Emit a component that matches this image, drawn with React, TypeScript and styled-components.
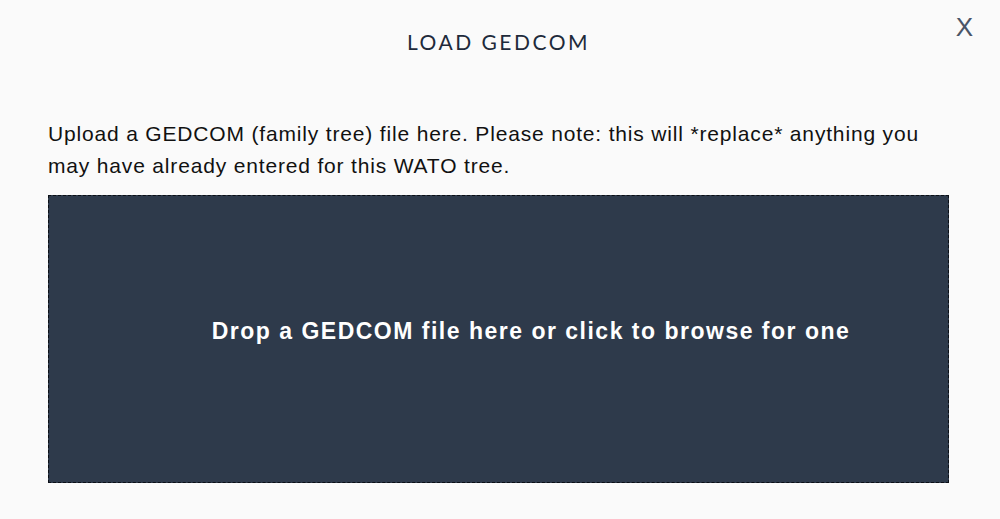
import styled, { createGlobalStyle } from "styled-components";

const GlobalStyle = createGlobalStyle`
  html, body {
    margin: 0;
    padding: 0;
    background: #fafafa;
  }
  body {
    font-family: "Liberation Sans", Arial, sans-serif;
  }
`;

const Modal = styled.div`
  position: relative;
  width: 1000px;
  height: 519px;
  box-sizing: border-box;
  padding: 0 51px 0 48px;
  background: #fafafa;
`;

const Header = styled.header`
  display: flex;
  justify-content: center;
  padding-top: 29px;
  height: 92px;
  box-sizing: border-box;
`;

const Title = styled.h2`
  margin: 0;
  font-family: Lato, "Open Sans", sans-serif;
  font-weight: 400;
  font-size: 21px;
  letter-spacing: 2.5px;
  color: #1e2a3b;
  line-height: 26px;
`;

const CloseButton = styled.button`
  position: absolute;
  top: 12px;
  right: 27px;
  padding: 0;
  border: 0;
  background: none;
  font-family: "Liberation Sans", Arial, sans-serif;
  font-size: 26px;
  color: #4a5568;
  cursor: pointer;
`;

const Note = styled.p`
  margin: 26px 0 13px;
  font-size: 21px;
  letter-spacing: 0.83px;
  line-height: 32px;
  color: #111;
`;

const DropZone = styled.div`
  display: flex;
  align-items: center;
  justify-content: center;
  height: 288px;
  box-sizing: border-box;
  padding: 0 0 16px 65px;
  border: 1px dashed #0b0f16;
  background: #2e3a4b;
  cursor: pointer;
`;

const DropText = styled.span`
  font-size: 23px;
  font-weight: 700;
  letter-spacing: 1.5px;
  color: #fff;
`;

export default function App() {
  return (
    <>
      <GlobalStyle />
      <Modal>
        <Header>
          <Title>LOAD GEDCOM</Title>
        </Header>
        <CloseButton>X</CloseButton>
        <Note>
          Upload a GEDCOM (family tree) file here. Please note: this will
          *replace* anything you may have already entered for this WATO tree.
        </Note>
        <DropZone>
          <DropText>Drop a GEDCOM file here or click to browse for one</DropText>
        </DropZone>
      </Modal>
    </>
  );
}
